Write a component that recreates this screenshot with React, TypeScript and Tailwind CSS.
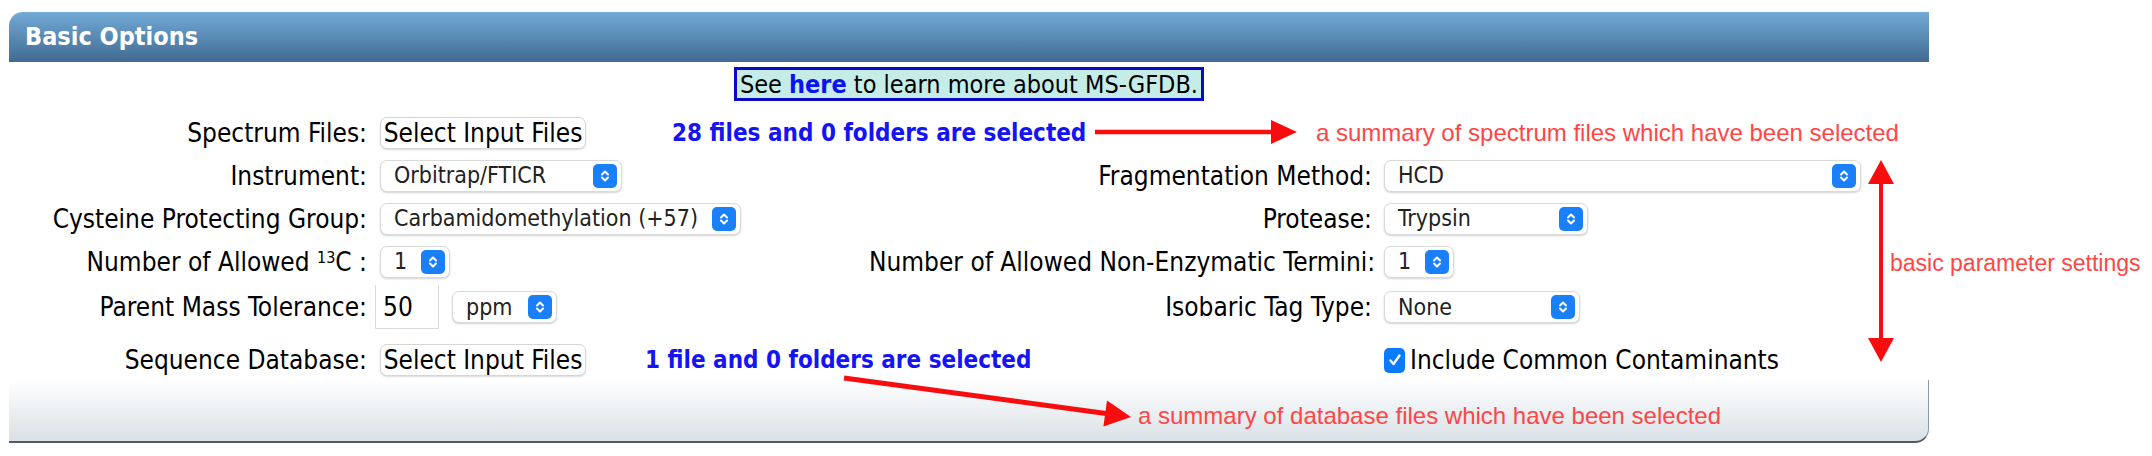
import React from "react";

const Stepper = () => (
  <span className="flex h-[24px] w-[24px] shrink-0 items-center justify-center rounded-[5px] bg-[#1a7ffb]">
    <svg width="12" height="16" viewBox="0 0 12 16" fill="none" stroke="white" strokeWidth="2" strokeLinecap="round" strokeLinejoin="round">
      <path d="M3 6.5 6 3.5 9 6.5" />
      <path d="M3 9.5 6 12.5 9 9.5" />
    </svg>
  </span>
);

const Select = ({ value, width }: { value: string; width: string }) => (
  <div
    className={`flex h-[32px] ${width} shrink-0 items-center justify-between rounded-[7px] border border-[#dadada] bg-white pl-[13px] pr-[4px] text-[23px] leading-none text-[#222] shadow-[0_1px_2px_rgba(0,0,0,0.18)]`}
  >
    <span className="whitespace-nowrap">{value}</span>
    <Stepper />
  </div>
);

const FileButton = () => (
  <button className="flex h-[32px] w-[206px] shrink-0 items-center justify-center rounded-[7px] border border-[#d6d6d6] bg-white text-[26px] leading-none text-black shadow-[0_1px_2px_rgba(0,0,0,0.15)]">
    Select Input Files
  </button>
);

const Row = ({
  h,
  label,
  left,
  rightLabel,
  right,
  className = "",
}: {
  h: string;
  label: React.ReactNode;
  left: React.ReactNode;
  rightLabel?: React.ReactNode;
  right?: React.ReactNode;
  className?: string;
}) => (
  <div className={`flex items-center ${h} ${className}`}>
    <div className="w-[358px] shrink-0 whitespace-nowrap text-right">{label}</div>
    <div className="ml-[13px] flex w-[489px] shrink-0 items-center">{left}</div>
    <div className="w-[503px] shrink-0 whitespace-nowrap text-right">{rightLabel}</div>
    <div className="ml-[12px] flex items-center">{right}</div>
  </div>
);

export default function App() {
  return (
    <div className="relative h-[456px] w-[2152px] overflow-hidden bg-white pl-[9px] pt-[12px] font-['DejaVu_Sans_Condensed','DejaVu_Sans',sans-serif] font-stretch-condensed text-[26px] leading-[30px] text-black">
      <div className="w-[1920px]">
        {/* header */}
        <div className="flex h-[50px] items-center rounded-tl-[14px] bg-linear-to-b from-[#72abd7] to-[#416b91] pl-[16px]">
          <span className="text-[25px] font-bold text-white">Basic Options</span>
        </div>

        {/* body */}
        <div className="pt-[5px]">
          <div className="flex justify-center">
            <div className="flex h-[34px] items-center border-[3px] border-[#0a0ac8] bg-[#c6ece8] px-[3px] text-[25px] leading-none">
              See&nbsp;<a className="font-bold text-[#0a14f0]">here</a>&nbsp;to learn more about MS-GFDB.
            </div>
          </div>

          <Row
            h="h-[43px]"
            className="mt-[10px]"
            label="Spectrum Files:"
            left={
              <>
                <FileButton />
                <span className="ml-[86px] whitespace-nowrap text-[24px] font-bold text-[#1414f5]">
                  28 files and 0 folders are selected
                </span>
              </>
            }
          />
          <Row
            h="h-[43px]"
            label="Instrument:"
            left={<Select value="Orbitrap/FTICR" width="w-[242px]" />}
            rightLabel="Fragmentation Method:"
            right={<Select value="HCD" width="w-[477px]" />}
          />
          <Row
            h="h-[43px]"
            label="Cysteine Protecting Group:"
            left={<Select value="Carbamidomethylation (+57)" width="w-[361px]" />}
            rightLabel="Protease:"
            right={<Select value="Trypsin" width="w-[204px]" />}
          />
          <Row
            h="h-[43px]"
            label={
              <>
                Number of Allowed <sup className="text-[16px]">13</sup>C :
              </>
            }
            left={<Select value="1" width="w-[70px]" />}
            rightLabel="Number of Allowed Non-Enzymatic Termini:"
            right={<Select value="1" width="w-[70px]" />}
          />
          <Row
            h="h-[48px]"
            label="Parent Mass Tolerance:"
            left={
              <>
                <input
                  readOnly
                  value="50"
                  className="-ml-[5px] h-[44px] w-[64px] border border-t-0 border-[#dcdcdc] bg-white pl-[7px] text-[26px] outline-none"
                />
                <div className="ml-[13px]">
                  <Select value="ppm" width="w-[105px]" />
                </div>
              </>
            }
            rightLabel="Isobaric Tag Type:"
            right={<Select value="None" width="w-[196px]" />}
          />
          <Row
            h="h-[40px]"
            className="mt-[9px]"
            label="Sequence Database:"
            left={
              <>
                <FileButton />
                <span className="ml-[59px] whitespace-nowrap text-[24px] font-bold text-[#1414f5]">
                  1 file and 0 folders are selected
                </span>
              </>
            }
            right={
              <div className="flex items-center">
                <span className="flex h-[25px] w-[21px] items-center justify-center rounded-[5px] bg-[#0a7aff]">
                  <svg width="14" height="14" viewBox="0 0 14 14" fill="none" stroke="white" strokeWidth="2.4" strokeLinecap="round" strokeLinejoin="round">
                    <path d="M2.5 7.5 5.5 11 11.5 2.5" />
                  </svg>
                </span>
                <span className="ml-[5px] whitespace-nowrap">Include Common Contaminants</span>
              </div>
            }
          />
        </div>

        {/* footer */}
        <div className="h-[63px] rounded-br-[14px] border-r border-b-2 border-r-[#8e9aa5] border-b-[#4f5c68] bg-linear-to-b from-white to-[#dae1e7]" />
      </div>

      {/* annotations */}
      <svg className="absolute left-[1095px] top-[120px]" width="202" height="24" viewBox="0 0 202 24">
        <line x1="0" y1="12" x2="178" y2="12" stroke="#f70d0d" strokeWidth="4.5" />
        <polygon points="176,0 202,12 176,24" fill="#f70d0d" />
      </svg>
      <span className="absolute left-[1316px] top-[118px] whitespace-nowrap font-['Liberation_Sans',sans-serif] text-[24px] leading-[30px] text-[#ff4646]">
        a summary of spectrum files which have been selected
      </span>

      <svg className="absolute left-[1868px] top-[158px]" width="26" height="206" viewBox="0 0 26 206">
        <line x1="13" y1="24" x2="13" y2="182" stroke="#f70d0d" strokeWidth="4" />
        <polygon points="13,2 0,26 26,26" fill="#f70d0d" />
        <polygon points="13,204 0,180 26,180" fill="#f70d0d" />
      </svg>
      <span className="absolute left-[1890px] top-[248px] whitespace-nowrap font-['Liberation_Sans',sans-serif] text-[23px] leading-[30px] text-[#ff4646]">
        basic parameter settings
      </span>

      <svg className="absolute left-[835px] top-[370px]" width="300" height="65" viewBox="0 0 300 65">
        <line x1="9" y1="8" x2="271" y2="43.5" stroke="#f70d0d" strokeWidth="5" />
        <polygon points="296,47 268.4,56.4 272,30.6" fill="#f70d0d" />
      </svg>
      <span className="absolute left-[1138px] top-[401px] whitespace-nowrap font-['Liberation_Sans',sans-serif] text-[24px] leading-[30px] text-[#ff4646]">
        a summary of database files which have been selected
      </span>
    </div>
  );
}
